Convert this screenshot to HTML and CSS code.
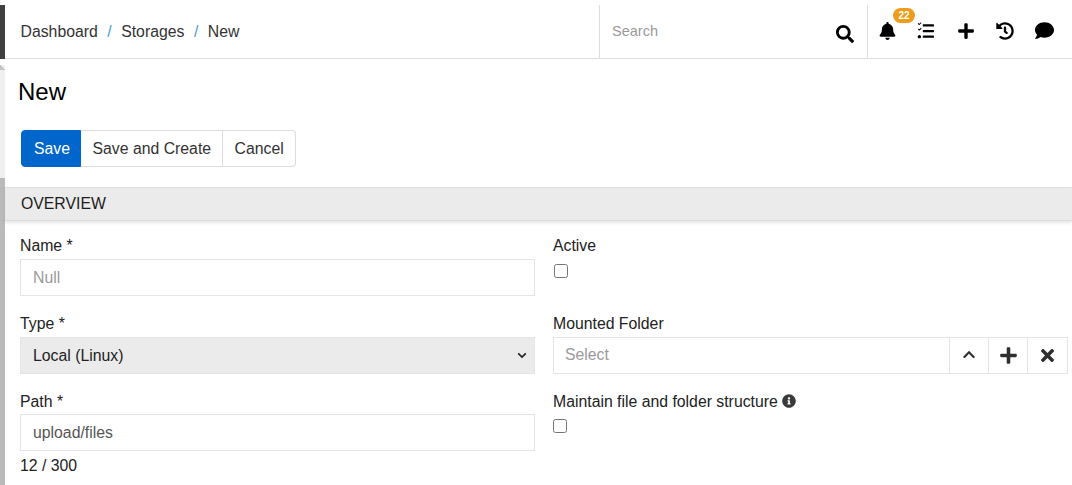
FILE: index.html
```html
<!DOCTYPE html>
<html lang="en">
<head>
<meta charset="utf-8">
<title>New</title>
<link rel="stylesheet" href="styles.css">
</head>
<body>
<div class="app">
  <aside class="rail">
    <div class="rail-gap"></div>
    <div class="rail-dark"></div>
    <div class="rail-notch"></div>
    <div class="rail-light"></div>
    <div class="rail-thumb"></div>
  </aside>
  <main class="main">
    <header class="topbar">
      <nav class="crumbs">
        <a>Dashboard</a><span class="sep">/</span><a>Storages</a><span class="sep">/</span><a>New</a>
      </nav>
      <div class="search">
        <span class="search-text">Search</span>
        <svg class="ic-search" viewBox="0 0 512 512"><path d="M505 442.700L405.300 343c-4.500-4.500-10.600-7-17-7H372c27.600-35.300 44-79.700 44-128C416 93.100 322.900 0 208 0S0 93.100 0 208s93.100 208 208 208c48.300 0 92.700-16.400 128-44v16.300c0 6.400 2.500 12.500 7 17l99.700 99.700c9.400 9.400 24.600 9.400 33.900 0l28.300-28.300c9.400-9.400 9.400-24.600.1-34zM208 336c-70.700 0-128-57.200-128-128 0-70.700 57.200-128 128-128 70.700 0 128 57.200 128 128 0 70.700-57.200 128-128 128z"/></svg>
      </div>
      <div class="actions">
        <div class="action bell">
          <svg class="ic" viewBox="0 0 448 512"><path d="M224 512c35.300 0 64-28.700 64-64H160c0 35.300 28.700 64 64 64zm215.400-149.700c-19.300-20.800-55.500-52-55.500-154.300 0-77.700-54.500-139.900-128-155.200V32c0-17.700-14.300-32-32-32s-32 14.300-32 32v20.800C118.400 68.100 64 130.300 64 208c0 102.300-36.200 133.500-55.500 154.300-6 6.400-8.600 14.100-8.500 21.700.1 16.400 13 32 32.100 32h383.800c19.100 0 32-15.600 32.100-32 .1-7.600-2.500-15.300-8.500-21.700z"/></svg>
          <span class="badge">22</span>
        </div>
        <div class="action">
          <svg class="ic ic-list" viewBox="48 0 472 512"><path d="M139.600 4.900L96.500 47.600 80.400 32.100c-3.400-3.300-8.900-3.300-12.300 0L55.900 44.200c-3.400 3.300-3.400 8.700 0 12l29.300 28.900c3.400 3.300 8.900 3.300 12.300 0l12.900-12.700 42.900-42.500c3.400-3.300 3.400-8.700 0-12L140.800 5c-.4-.1-.8-.1-1.200-.1zM139.600 164.900L96.500 207.600 80.400 192.100c-3.400-3.300-8.900-3.300-12.300 0L55.900 204.200c-3.400 3.300-3.400 8.700 0 12l29.300 28.900c3.400 3.300 8.900 3.300 12.300 0l12.900-12.700 42.900-42.500c3.400-3.300 3.400-8.700 0-12l-12.300-12.900c-.4-.1-.8-.1-1.200-.1zM96 368c-26.500 0-48 21.500-48 48s21.500 48 48 48 48-21.500 48-48-21.500-48-48-48zM496 384H208c-8.800 0-16 7.200-16 16v32c0 8.800 7.200 16 16 16h288c8.800 0 16-7.200 16-16v-32c0-8.800-7.200-16-16-16zm0-320H208c-8.800 0-16 7.200-16 16v32c0 8.800 7.200 16 16 16h288c8.800 0 16-7.200 16-16V80c0-8.800-7.200-16-16-16zm0 160H208c-8.800 0-16 7.200-16 16v32c0 8.800 7.200 16 16 16h288c8.800 0 16-7.200 16-16v-32c0-8.800-7.200-16-16-16z"/></svg>
        </div>
        <div class="action">
          <svg class="ic" viewBox="0 0 448 512"><path d="M416 208H272V64c0-17.670-14.330-32-32-32h-32c-17.670 0-32 14.330-32 32v144H32c-17.670 0-32 14.330-32 32v32c0 17.670 14.330 32 32 32h144v144c0 17.670 14.330 32 32 32h32c17.670 0 32-14.330 32-32V304h144c17.670 0 32-14.330 32-32v-32c0-17.670-14.330-32-32-32z"/></svg>
        </div>
        <div class="action">
          <svg class="ic" viewBox="0 0 512 512"><path d="M504 255.500c.3 136.600-111.100 248.400-247.700 248.500-59 0-113.200-20.500-155.800-54.900-11.100-9-11.900-25.600-1.800-35.700l11.300-11.300c8.600-8.600 22.400-9.600 31.900-2C173.100 425.100 212.800 440 256 440c101.700 0 184-82.300 184-184 0-101.700-82.300-184-184-184-48.800 0-93.100 19-126.100 49.900l50.800 50.800c10.100 10.100 2.900 27.300-11.300 27.300H24c-8.800 0-16-7.200-16-16V38.600c0-14.300 17.200-21.400 27.300-11.300l49.400 49.400C129.200 34.100 189.600 8 256 8c136.800 0 247.700 110.800 248 247.500zM323 334.300l9.800-12.600c8.100-10.500 6.300-25.500-4.200-33.700L288 256.400V152c0-13.300-10.700-24-24-24h-16c-13.300 0-24 10.700-24 24v135.600l65.300 50.800c10.500 8.100 25.500 6.200 33.700-4.100z"/></svg>
        </div>
        <div class="action">
          <svg class="ic ic-comment" viewBox="0 0 512 512"><path d="M256 32C114.600 32 0 125.100 0 240c0 49.600 21.400 95 57 130.700C44.500 421.100 2.700 466 2.200 466.500c-2.200 2.300-2.800 5.700-1.500 8.700S4.800 480 8 480c66.300 0 116-31.800 140.600-51.400 32.700 12.300 69 19.400 107.400 19.400 141.400 0 256-93.100 256-208S397.400 32 256 32z"/></svg>
        </div>
      </div>
    </header>

    <h1 class="title">New</h1>

    <div class="btn-group">
      <button class="btn btn-primary" type="button">Save</button>
      <button class="btn" type="button">Save and Create</button>
      <button class="btn" type="button">Cancel</button>
    </div>

    <div class="section-head">OVERVIEW</div>

    <form class="form">
      <div class="col">
        <div class="field">
          <label class="label">Name *</label>
          <div class="control placeholder">Null</div>
        </div>
        <div class="field">
          <label class="label">Type *</label>
          <div class="control select">
            <span>Local (Linux)</span>
            <svg class="chev" viewBox="0 0 12 8"><path d="M1.500 1.500L6 6l4.500-4.500" fill="none" stroke="#222" stroke-width="2"/></svg>
          </div>
        </div>
        <div class="field">
          <label class="label label-tight">Path *</label>
          <div class="control value">upload/files</div>
          <div class="counter">12 / 300</div>
        </div>
      </div>
      <div class="col">
        <div class="field">
          <label class="label">Active</label>
          <span class="check"></span>
        </div>
        <div class="field">
          <label class="label">Mounted Folder</label>
          <div class="picker">
            <div class="picker-input">Select</div>
            <div class="picker-btn">
              <svg class="pic pic-up" viewBox="0 0 448 512"><path d="M240.970 151l194.400 194.300c9.400 9.400 9.400 24.600 0 33.900l-22.700 22.700c-9.400 9.400-24.500 9.400-33.900 0L224 247.300 70.200 401.900c-9.400 9.300-24.500 9.300-33.900 0l-22.700-22.700c-9.400-9.400-9.400-24.600 0-33.900L207 151c9.400-9.400 24.600-9.400 33.970 0z"/></svg>
            </div>
            <div class="picker-btn">
              <svg class="pic pic-lg" viewBox="0 0 448 512"><path d="M416 208H272V64c0-17.670-14.330-32-32-32h-32c-17.670 0-32 14.330-32 32v144H32c-17.670 0-32 14.330-32 32v32c0 17.670 14.330 32 32 32h144v144c0 17.670 14.330 32 32 32h32c17.670 0 32-14.330 32-32V304h144c17.670 0 32-14.330 32-32v-32c0-17.670-14.330-32-32-32z"/></svg>
            </div>
            <div class="picker-btn">
              <svg class="pic pic-x" viewBox="0 0 352 512"><path d="M242.720 256l100.070-100.070c12.280-12.280 12.280-32.190 0-44.480l-22.240-22.240c-12.280-12.280-32.190-12.280-44.480 0L176 189.280 75.930 89.210c-12.280-12.280-32.190-12.280-44.480 0L9.210 111.450c-12.280 12.280-12.280 32.190 0 44.480L109.280 256 9.210 356.070c-12.280 12.280-12.280 32.190 0 44.480l22.240 22.240c12.280 12.280 32.200 12.280 44.480 0L176 322.720l100.070 100.070c12.280 12.280 32.200 12.280 44.480 0l22.240-22.240c12.280-12.280 12.280-32.190 0-44.480L242.720 256z"/></svg>
            </div>
          </div>
        </div>
        <div class="field">
          <label class="label">Maintain file and folder structure
            <svg class="info" viewBox="0 0 512 512"><path d="M256 8C119 8 8 119.100 8 256c0 137 111 248 248 248s248-111 248-248C504 119.100 393 8 256 8zm0 110c23.200 0 42 18.800 42 42s-18.800 42-42 42-42-18.800-42-42 18.800-42 42-42zm56 254c0 6.600-5.400 12-12 12h-88c-6.600 0-12-5.400-12-12v-24c0-6.600 5.400-12 12-12h12v-64h-12c-6.600 0-12-5.400-12-12v-24c0-6.600 5.400-12 12-12h64c6.600 0 12 5.400 12 12v100h12c6.600 0 12 5.400 12 12v24z"/></svg>
          </label>
          <span class="check check-low"></span>
        </div>
      </div>
    </form>
  </main>
</div>
</body>
</html>
```
FILE: styles.css
```css
* { box-sizing: border-box; }
html, body { margin: 0; padding: 0; height: 100%; overflow: hidden; background: #fff; }
body { font-family: "Liberation Sans", Arial, sans-serif; font-size: 15.8px; color: #212121; }
.app { display: flex; height: 485px; }
.rail { width: 5px; flex: none; display: flex; flex-direction: column; }
.rail-gap { height: 5px; }
.rail-dark { height: 54px; background: #3f3f3f; }
.rail-notch { height: 6px; background: #fff; }
.rail-light { height: 113px; background: linear-gradient(45deg, #c4c4c4 50%, transparent 50%) 0 0 / 5px 5px no-repeat, #efefef; }
.rail-thumb { flex: 1; background: #bababa; }
.main { flex: 1; min-width: 0; }

.topbar { height: 59px; display: flex; border-bottom: 1px solid #ddd; }
.crumbs { width: 594px; flex: none; padding: 23px 0 0 15.500px; line-height: 18px; color: #333; }
.sep { color: #4a9bd8; margin: 0 9.500px; }
.search { width: 268px; flex: none; display: flex; justify-content: space-between; border-left: 1px solid #ddd; margin-top: 5px; padding: 17px 13px 0 12px; color: #9a9a9a; font-size: 14.500px; }
.search-text { line-height: 18px; }
.ic-search { width: 18px; height: 18px; margin-top: 3px; fill: #000; }
.actions { flex: 1; display: flex; border-left: 1px solid #ddd; margin-top: 5px; }
.action { width: 39px; display: flex; justify-content: center; align-items: flex-start; padding-top: 17px; position: relative; }
.ic { width: 18px; height: 18px; fill: #000; }
.bell .ic { width: 17px; }
.ic-list { margin-left: -2px; }
.ic-comment { width: 19px; height: 19px; margin: -1px 0 0 1px; }
.badge { position: absolute; left: 25px; top: 3px; width: 22px; height: 15px; border-radius: 8px; background: #ee9d1b; color: #fff; font-size: 10px; font-weight: 700; line-height: 15px; text-align: center; }

.title { margin: 0; padding: 21px 0 0 13px; font-size: 24px; font-weight: 400; line-height: 24px; color: #000; height: 71px; }
.btn-group { display: inline-flex; margin-left: 16px; height: 37px; vertical-align: top; }
.btn { font: inherit; color: #333; background: #fff; border: 1px solid #ddd; border-left-width: 0; padding: 0 10.500px 0 11.500px; height: 37px; }
.btn:last-child { border-radius: 0 4px 4px 0; padding: 0 11px 0 12px; }
.btn-primary { background: #0066cc; border-color: #0066cc; color: #fff; border-radius: 4px 0 0 4px; width: 60px; border-left-width: 1px; padding: 0 0 0 2px; }

.section-head { margin-top: 20px; height: 34px; background: #ebebeb; border-top: 1px solid #ddd; border-bottom: 1px solid #ddd; box-shadow: 0 2px 3px rgba(0,0,0,.1); padding: 7px 0 0 16px; line-height: 18px; color: #1c1c1c; }

.form { display: flex; padding: 15px 4px 0 15px; gap: 18px; }
.col { display: flex; flex-direction: column; }
.col:first-child { width: 515px; flex: none; }
.col:last-child { flex: 1; min-width: 0; }
.field { height: 78px; }
.label { display: block; line-height: 19px; margin-bottom: 4px; color: #222; }
.label-tight { margin-bottom: 3px; }
.control { height: 37px; border: 1px solid #e4e4e4; padding: 0 12px; line-height: 35px; }
.placeholder { color: #9a9a9a; }
.value { color: #555; }
.select { background: #ebebeb; color: #222; display: flex; justify-content: space-between; align-items: center; padding-right: 7px; }
.chev { width: 10px; height: 7px; }
.counter { line-height: 18px; margin-top: 6px; color: #222; }
.check { display: block; width: 14px; height: 14px; margin: 9px 0 0 1px; border: 1px solid #767676; border-radius: 2.500px; background: #fff; }
.check-low { margin: 8px 0 0; }
.picker { display: flex; height: 37px; border: 1px solid #e4e4e4; }
.picker-input { flex: 1; padding-left: 11px; line-height: 34px; color: #9a9a9a; }
.picker-btn { width: 39px; display: flex; align-items: center; justify-content: center; border-left: 1px solid #e4e4e4; }
.picker-btn:last-child { width: 40px; }
.pic { width: 14px; height: 16px; fill: #2e2e2e; }
.pic-up { width: 12px; height: 14px; margin-bottom: 4px; }
.pic-lg { width: 17px; height: 19px; }
.pic-x { width: 13px; height: 19px; }
.info { width: 14px; height: 14px; fill: #3a3a3a; margin-left: 0; vertical-align: -1px; }
```
